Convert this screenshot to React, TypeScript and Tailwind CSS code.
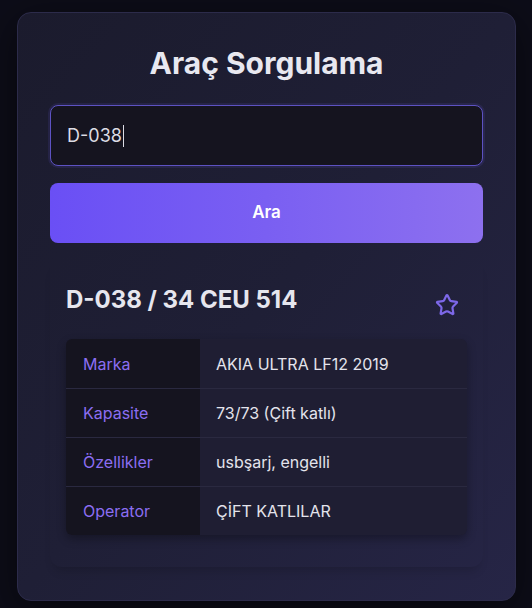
import { Star } from 'lucide-react';

const rows: { label: string; value: string }[] = [
  { label: 'Marka', value: 'AKIA ULTRA LF12 2019' },
  { label: 'Kapasite', value: '73/73 (Çift katlı)' },
  { label: 'Özellikler', value: 'usbşarj, engelli' },
  { label: 'Operator', value: 'ÇİFT KATLILAR' },
];

export default function App() {
  return (
    <div className="min-h-[608px] w-full bg-[#0d0d18] pl-[17px] pr-[16px] pt-3 pb-[7px] font-['Inter',sans-serif]">
      <div className="rounded-[14px] border border-[#2c2b4a] bg-gradient-to-br from-[#1b1b2d] via-[#1f1f36] to-[#262546] px-[32px] pt-[32px] pb-[33px] shadow-[0_10px_40px_rgba(0,0,0,0.5)]">
        <h1 className="mb-[24px] text-center text-[30px] leading-[36px] font-bold text-[#e8e8f0]">Araç Sorgulama</h1>

        <div className="flex h-[61px] items-center rounded-lg border-[1.5px] border-[#5d52c2] bg-[#15141f] px-4 shadow-[0_0_0_2px_rgba(108,92,231,0.12)]">
          <span className="text-[18px] text-[#dcdce4]">D-038</span>
          <span className="ml-[1px] h-[22px] w-px bg-[#dcdce4]" />
        </div>

        <button className="mt-[17px] flex h-[60px] w-full items-center justify-center rounded-lg bg-gradient-to-r from-[#6a4ff5] via-[#7a5ff2] to-[#8d70ef] text-[17px] font-semibold text-white">
          Ara
        </button>

        <div className="mt-4 rounded-xl bg-white/[0.005] px-4 pt-6 pb-8 shadow-[0_8px_10px_-4px_rgba(0,0,0,0.15)]">
          <div className="mb-[22px] flex items-center justify-between">
            <h2 className="text-[24px] leading-[30px] font-bold text-[#e6e6ee]">D-038 / 34 CEU 514</h2>
            <Star size={24} strokeWidth={2.2} className="mr-[8px] mt-[10px] text-[#7d68e8]" />
          </div>

          <div className="overflow-hidden rounded-md bg-[#1f1e33] shadow-[0_4px_10px_rgba(0,0,0,0.3)]">
            {rows.map((r, i) => (
              <div key={r.label} className={`flex h-[49px] items-center ${i > 0 ? 'border-t border-[#2a2940]' : ''}`}>
                <div className="flex h-full w-[134px] items-center bg-[#15141f] px-[17px] text-[16px] text-[#8b6ef2]">{r.label}</div>
                <div className="px-4 text-[16px] text-[#e4e4ec]">{r.value}</div>
              </div>
            ))}
          </div>
        </div>
      </div>
    </div>
  );
}
